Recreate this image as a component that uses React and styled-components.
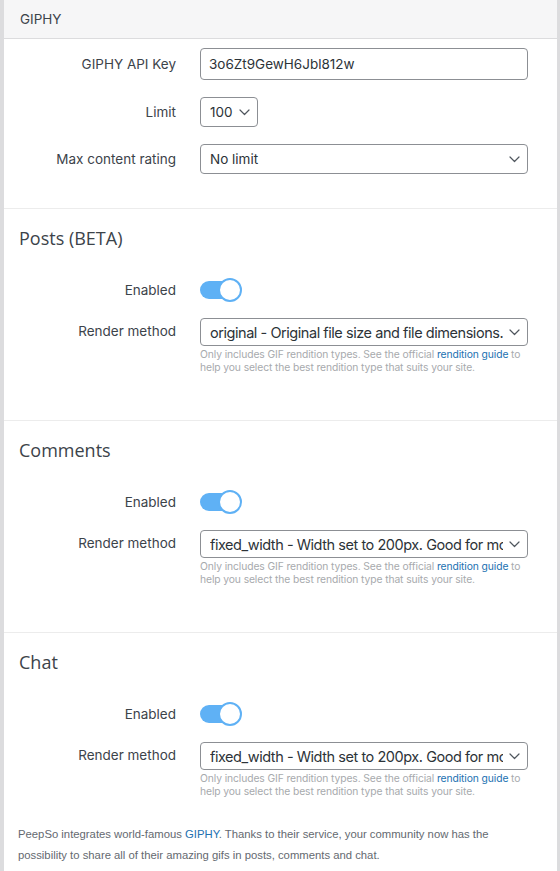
import React from "react";
import styled, { createGlobalStyle } from "styled-components";

const GlobalStyle = createGlobalStyle`
  html, body {
    margin: 0;
    padding: 0;
    background: #dcdcde;
  }
  body {
    font-family: Inter, "Liberation Sans", Arial, sans-serif;
    color: #3c434a;
  }
`;

const sections = [
  { title: "Posts (BETA)", render: "original - Original file size and file dimensions." },
  { title: "Comments", render: "fixed_width - Width set to 200px. Good for mobile." },
  { title: "Chat", render: "fixed_width - Width set to 200px. Good for mobile." },
];

const Chevron = () => (
  <svg width="11" height="7" viewBox="0 0 11 7" fill="none">
    <polyline points="1,1 5.5,5.5 10,1" stroke="#50575e" strokeWidth="1.2" strokeLinecap="round" strokeLinejoin="round" />
  </svg>
);

const App = () => {
  return (
    <>
      <GlobalStyle />
      <Page>
        <Panel>
          <Header>GIPHY</Header>
          <TopSection>
            <Row>
              <Label>GIPHY API Key</Label>
              <TextInput>3o6Zt9GewH6Jbl812w</TextInput>
            </Row>
            <Row>
              <Label>Limit</Label>
              <Select $width="58px">
                <span>100</span>
                <Chevron />
              </Select>
            </Row>
            <Row>
              <Label>Max content rating</Label>
              <Select>
                <span>No limit</span>
                <Chevron />
              </Select>
            </Row>
          </TopSection>
          {sections.map((s, i) => (
            <Section key={s.title} $last={i === sections.length - 1}>
              <Heading>{s.title}</Heading>
              <Row $mt="27px">
                <Label>Enabled</Label>
                <Toggle>
                  <Knob />
                </Toggle>
              </Row>
              <Row $mt="15px" $align="start">
                <Label $pt="5px">Render method</Label>
                <div>
                  <Select $height="28px" $size="14.5px" $spacing="-0.45px">
                    <SelectText>{s.render}</SelectText>
                    <Chevron />
                  </Select>
                  <Help>
                    Only includes GIF rendition types. See the official <a href="#">rendition guide</a> to help you select the best rendition type that suits your site.
                  </Help>
                </div>
              </Row>
            </Section>
          ))}
          <Footer>
            PeepSo integrates world-famous <a href="#">GIPHY</a>. Thanks to their service, your community now has the possibility to share all of their amazing gifs in posts, comments and chat.
          </Footer>
        </Panel>
      </Page>
    </>
  );
};

export default App;

const Page = styled.div`
  padding-left: 3px;
  padding-right: 2px;
  min-height: 871px;
`;

const Panel = styled.div`
  background: #fff;
  border: 1px solid #dcdcde;
  border-top: none;
  min-height: 871px;
  box-sizing: border-box;
`;

const Header = styled.div`
  height: 38px;
  display: flex;
  align-items: center;
  padding-left: 16px;
  background: #f6f6f7;
  border-bottom: 1px solid #dcdcde;
  font-size: 13.5px;
  color: #3c434a;
`;

const TopSection = styled.div`
  display: flex;
  flex-direction: column;
  gap: 17px;
  padding: 9px 0 34px;
  border-bottom: 1px solid #ececec;
`;

const Section = styled.div`
  padding: 17px 0 ${(p) => (p.$last ? "25px" : "46px")};
  border-bottom: ${(p) => (p.$last ? "none" : "1px solid #ececec")};
`;

const Heading = styled.h2`
  margin: 0;
  padding-left: 15px;
  font-family: "Open Sans", "Noto Sans", sans-serif;
  font-size: 18px;
  font-weight: 400;
  line-height: 24px;
  color: #3c434a;
`;

const Row = styled.div`
  display: grid;
  grid-template-columns: 172px 328px;
  column-gap: 24px;
  align-items: ${(p) => p.$align || "center"};
  margin-top: ${(p) => p.$mt || "0"};
`;

const Label = styled.div`
  text-align: right;
  font-size: 13.5px;
  color: #3c434a;
  padding-top: ${(p) => p.$pt || "0"};
`;

const TextInput = styled.div`
  height: 32px;
  box-sizing: border-box;
  border: 1px solid #8c8f94;
  border-radius: 4px;
  padding: 0 8px;
  display: flex;
  align-items: center;
  font-size: 13.5px;
  color: #2c3338;
`;

const Select = styled.div`
  width: ${(p) => p.$width || "100%"};
  height: ${(p) => p.$height || "30px"};
  box-sizing: border-box;
  border: 1px solid #8c8f94;
  border-radius: 4px;
  padding: 0 7px 0 9px;
  display: flex;
  align-items: center;
  justify-content: space-between;
  gap: 6px;
  font-size: ${(p) => p.$size || "13.5px"};
  letter-spacing: ${(p) => p.$spacing || "0"};
  color: #2c3338;
  overflow: hidden;
  svg {
    flex-shrink: 0;
  }
`;

const SelectText = styled.span`
  white-space: nowrap;
  overflow: hidden;
  flex: 1;
`;

const Toggle = styled.div`
  position: relative;
  width: 42px;
  height: 26px;
  display: flex;
  align-items: center;
  &::before {
    content: "";
    width: 36px;
    height: 18px;
    border-radius: 9px;
    background: #5fb1f5;
  }
`;

const Knob = styled.span`
  position: absolute;
  right: 0;
  top: 1px;
  width: 20px;
  height: 20px;
  border-radius: 50%;
  background: #fff;
  border: 2px solid #5fb1f5;
`;

const Help = styled.p`
  margin: 2px 0 0;
  font-size: 10.3px;
  letter-spacing: -0.1px;
  line-height: 13px;
  color: #a7aaad;
  a {
    color: #2271b1;
    text-decoration: none;
  }
`;

const Footer = styled.p`
  margin: 0;
  padding: 1px 40px 20px 14px;
  font-family: "Liberation Sans", Arial, sans-serif;
  font-size: 11.3px;
  line-height: 21px;
  color: #646970;
  a {
    color: #2271b1;
    text-decoration: none;
  }
`;
